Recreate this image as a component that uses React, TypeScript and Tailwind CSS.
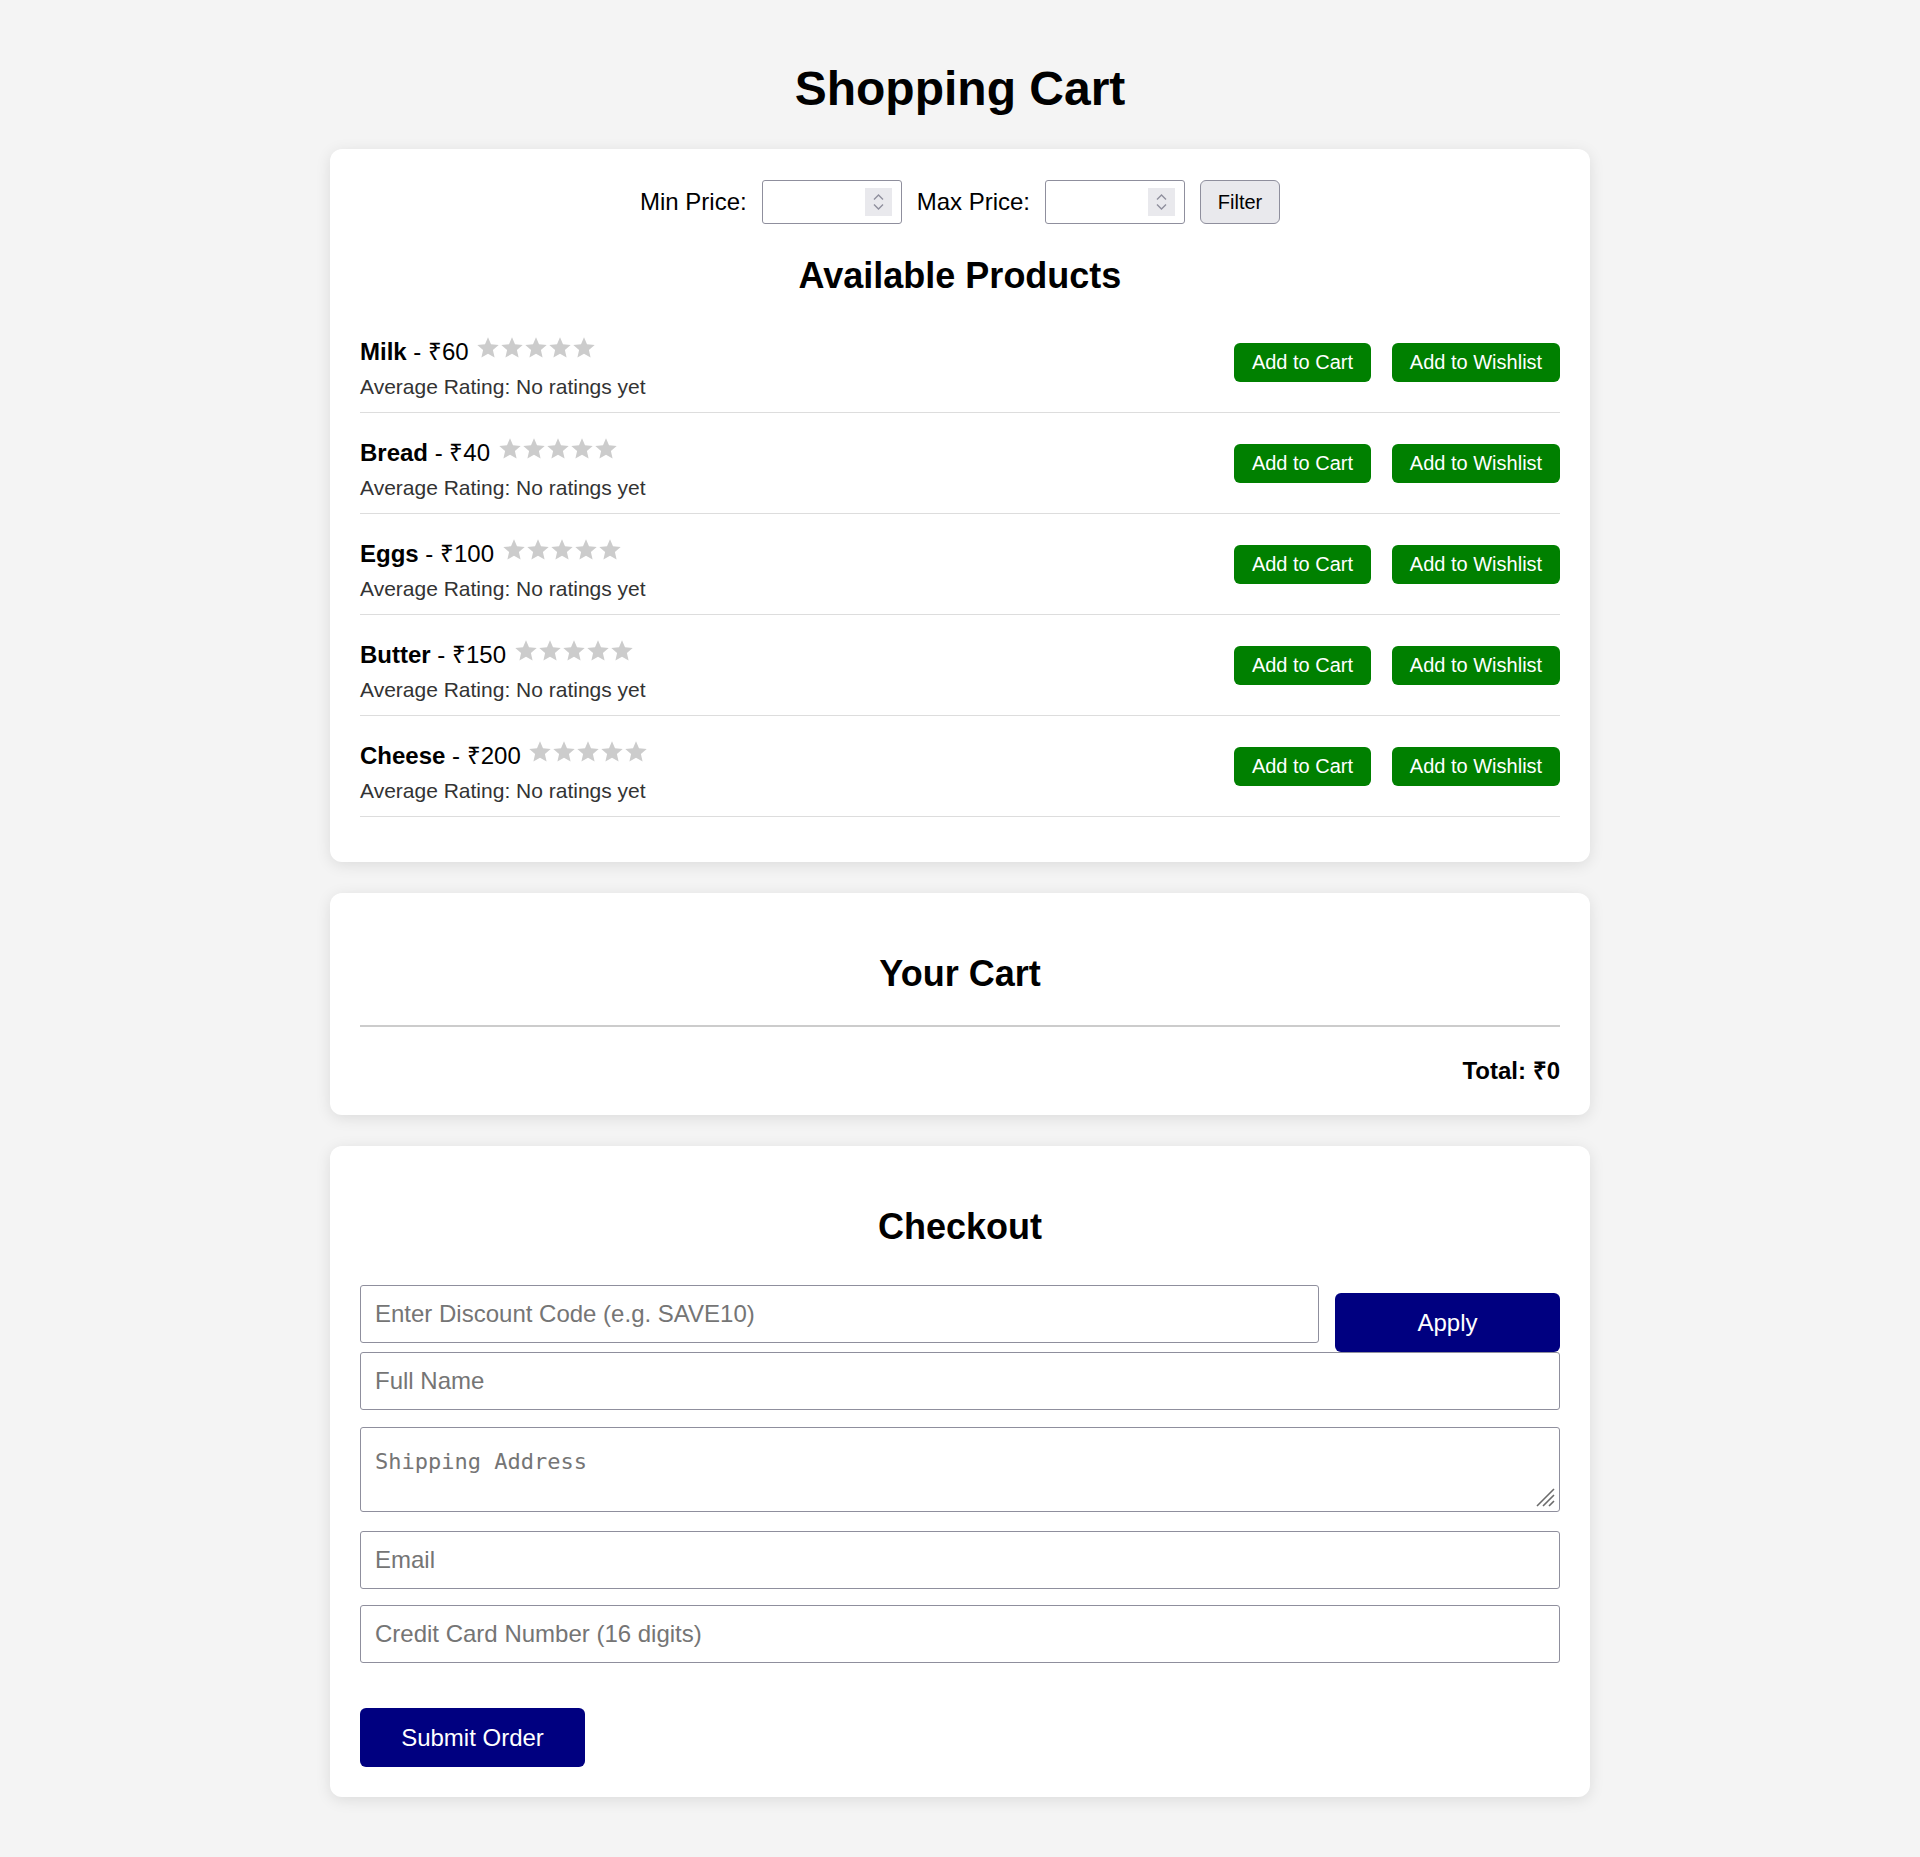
import React from 'react'

const products = [
  { name: 'Milk', price: 60 },
  { name: 'Bread', price: 40 },
  { name: 'Eggs', price: 100 },
  { name: 'Butter', price: 150 },
  { name: 'Cheese', price: 200 },
]

function Star() {
  return (
    <svg width="24" height="24" viewBox="0 0 24 24" className="inline-block align-[-3px]">
      <polygon
        points="12,1.2 15,8.3 22.7,9 16.9,14.1 18.6,21.6 12,17.7 5.4,21.6 7.1,14.1 1.3,9 9,8.3"
        fill="#cccccc"
      />
    </svg>
  )
}

function NumberField() {
  return (
    <div className="relative h-[44px] w-[140px] rounded-[3px] border border-[#8f8f9d] bg-white">
      <input type="text" className="h-full w-full bg-transparent px-[8px] text-[20px] outline-none" />
      <div className="absolute right-[9px] top-[7px] flex h-[28px] w-[27px] flex-col items-center justify-center gap-[4px] bg-[#e9e9ed]">
        <svg width="11" height="6" viewBox="0 0 11 6">
          <path d="M1 5.5 L5.5 1 L10 5.5" stroke="#8f8f9d" strokeWidth="1.4" fill="none" />
        </svg>
        <svg width="11" height="6" viewBox="0 0 11 6">
          <path d="M1 0.5 L5.5 5 L10 0.5" stroke="#8f8f9d" strokeWidth="1.4" fill="none" />
        </svg>
      </div>
    </div>
  )
}

function ProductRow({ name, price }: { name: string; price: number }) {
  return (
    <div className="flex h-[101px] items-center justify-between border-b border-[#dddddd]">
      <div className="self-start pt-[24px]">
        <div className="text-[24px] leading-[28px] text-black">
          <span className="font-bold">{name}</span> - ₹{price}{' '}
          <span className="ml-[1px] inline-flex">
            <Star />
            <Star />
            <Star />
            <Star />
            <Star />
          </span>
        </div>
        <div className="mt-[9px] text-[21px] leading-[24px] text-[#333333]">
          Average Rating: No ratings yet
        </div>
      </div>
      <div className="flex gap-[21px]">
        <button className="h-[39px] w-[137px] rounded-[6px] bg-[#008000] text-[20px] text-white">
          Add to Cart
        </button>
        <button className="h-[39px] w-[168px] rounded-[6px] bg-[#008000] text-[20px] text-white">
          Add to Wishlist
        </button>
      </div>
    </div>
  )
}

const fieldClass =
  'h-[58px] w-full rounded-[3px] border border-[#8f8f9d] bg-white px-[14px] text-[24px] text-black outline-none placeholder:text-[#757575]'

export default function App() {
  return (
    <div className="min-h-[1857px] bg-[#f4f4f4] pt-[61px] pb-[60px] font-['Liberation_Sans',Arial,sans-serif] text-black">
      <h1 className="h-[55px] text-center text-[48px] font-bold leading-[55px]">Shopping Cart</h1>

      <div className="mx-auto mt-[33px] flex w-[1260px] flex-col gap-[31px]">
        {/* products */}
        <div className="rounded-[12px] bg-white px-[30px] pt-[31px] pb-[45px] shadow-[0_3px_15px_rgba(0,0,0,0.1)]">
          <div className="flex h-[44px] items-center justify-center gap-[15px] text-[24px]">
            <span>Min Price:</span>
            <NumberField />
            <span>Max Price:</span>
            <NumberField />
            <button className="h-[44px] w-[80px] rounded-[6px] border border-[#8f8f9d] bg-[#e9e9ed] text-[20px] text-black">
              Filter
            </button>
          </div>
          <h2 className="mt-[31px] h-[41px] text-center text-[36px] font-bold leading-[41px]">
            Available Products
          </h2>
          <div className="mt-[16px]">
            {products.map((p) => (
              <ProductRow key={p.name} name={p.name} price={p.price} />
            ))}
          </div>
        </div>

        {/* cart */}
        <div className="rounded-[12px] bg-white px-[30px] pt-[30px] pb-[30px] shadow-[0_3px_15px_rgba(0,0,0,0.1)]">
          <h2 className="mt-[30px] h-[41px] text-center text-[36px] font-bold leading-[41px]">Your Cart</h2>
          <div className="mt-[31px] h-[2px] bg-[#cccccc]" />
          <div className="mt-[30px] text-right text-[24px] font-bold leading-[28px]">Total: ₹0</div>
        </div>

        {/* checkout */}
        <div className="rounded-[12px] bg-white px-[30px] pt-[30px] pb-[30px] shadow-[0_3px_15px_rgba(0,0,0,0.1)]">
          <h2 className="mt-[30px] h-[41px] text-center text-[36px] font-bold leading-[41px]">Checkout</h2>
          <div className="mt-[38px] flex items-start gap-[16px]">
            <input className={fieldClass + ' flex-1'} placeholder="Enter Discount Code (e.g. SAVE10)" />
            <button className="mt-[8px] h-[59px] w-[225px] shrink-0 rounded-[6px] bg-[#000080] text-[24px] text-white">
              Apply
            </button>
          </div>
          <input className={fieldClass + ' block'} placeholder="Full Name" />
          <div className="relative mt-[17px]">
            <textarea
              className="block h-[85px] w-full resize-none rounded-[3px] border border-[#8f8f9d] bg-white px-[14px] pt-[17px] font-['DejaVu_Sans_Mono',monospace] text-[22px] outline-none placeholder:text-[#757575]"
              placeholder="Shipping Address"
            />
            <svg width="22" height="22" viewBox="0 0 22 22" className="absolute right-[4px] bottom-[4px]">
              <path d="M20 3 L3 20 M20 9 L9 20 M20 15 L15 20" stroke="#6b6b6b" strokeWidth="1.6" fill="none" />
            </svg>
          </div>
          <input className={fieldClass + ' mt-[19px] block'} placeholder="Email" />
          <input className={fieldClass + ' mt-[16px] block'} placeholder="Credit Card Number (16 digits)" />
          <button className="mt-[45px] block h-[59px] w-[225px] rounded-[6px] bg-[#000080] text-[24px] text-white">
            Submit Order
          </button>
        </div>
      </div>
    </div>
  )
}
